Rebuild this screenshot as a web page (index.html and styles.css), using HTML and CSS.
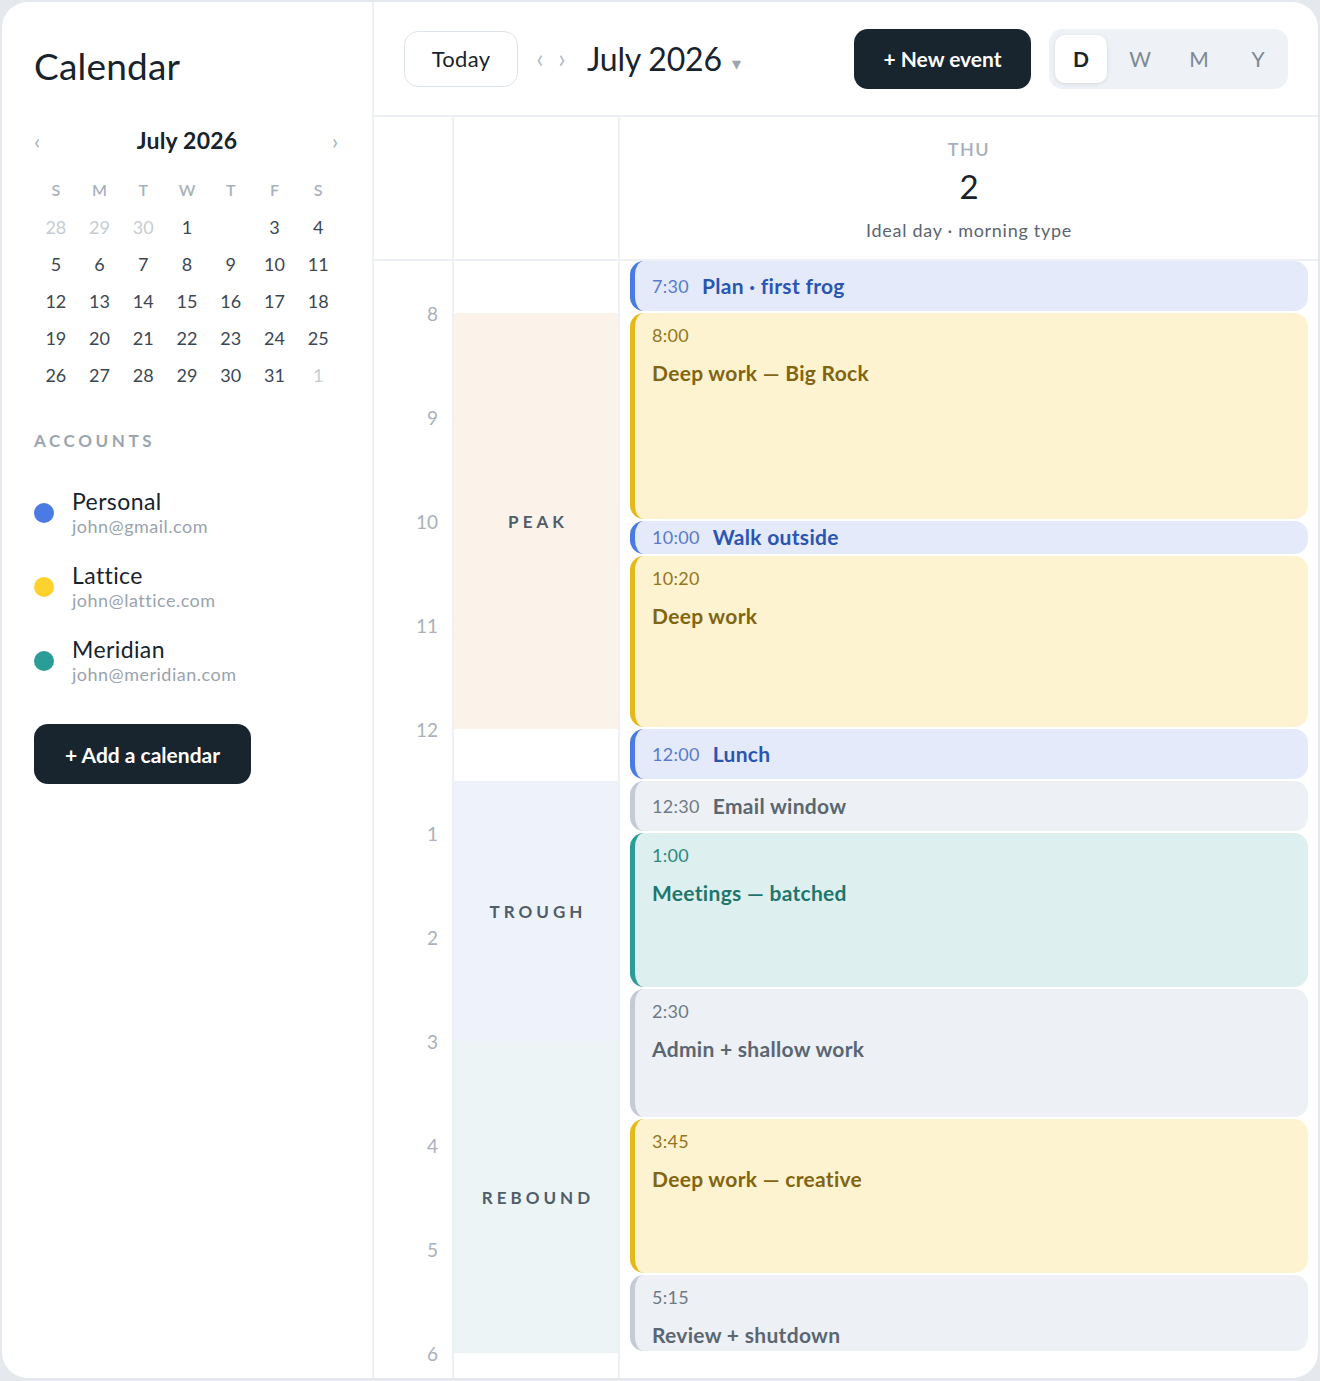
FILE: index.html
```html
<!DOCTYPE html>
<html lang="en">

<head>
	<meta charset="UTF-8">
	<meta name="viewport" content="width=device-width, initial-scale=1.0">
	<title>Calendar</title>
	<link rel="stylesheet" href="styles.css">
</head>

<body>
	<div class="app">
		<aside class="sidebar">
			<h1 class="title">Calendar</h1>

			<div class="miniHead">
				<span class="miniNav">‹</span>
				<span class="miniMonth">July 2026</span>
				<span class="miniNav">›</span>
			</div>
			<div class="miniGrid">
				<span class="dow">S</span><span class="dow">M</span><span class="dow">T</span><span class="dow">W</span><span class="dow">T</span><span class="dow">F</span><span class="dow">S</span>
				<span class="muted">28</span><span class="muted">29</span><span class="muted">30</span><span>1</span><span class="selected">2</span><span>3</span><span>4</span>
				<span>5</span><span>6</span><span>7</span><span>8</span><span>9</span><span>10</span><span>11</span>
				<span>12</span><span>13</span><span>14</span><span>15</span><span>16</span><span>17</span><span>18</span>
				<span>19</span><span>20</span><span>21</span><span>22</span><span>23</span><span>24</span><span>25</span>
				<span>26</span><span>27</span><span>28</span><span>29</span><span>30</span><span>31</span><span class="muted">1</span>
			</div>

			<h3 class="sectionLabel">Accounts</h3>
			<ul class="accounts">
				<li class="account">
					<span class="dot dotBlue"></span>
					<div>
						<div class="accName">Personal</div>
						<div class="accMail">john@gmail.com</div>
					</div>
				</li>
				<li class="account">
					<span class="dot dotYellow"></span>
					<div>
						<div class="accName">Lattice</div>
						<div class="accMail">john@lattice.com</div>
					</div>
				</li>
				<li class="account">
					<span class="dot dotTeal"></span>
					<div>
						<div class="accName">Meridian</div>
						<div class="accMail">john@meridian.com</div>
					</div>
				</li>
			</ul>

			<button class="btnDark btnAdd">+ Add a calendar</button>
		</aside>

		<main class="main">
			<header class="topbar">
				<button class="btnToday">Today</button>
				<span class="navArrow">‹</span>
				<span class="navArrow">›</span>
				<span class="month">July 2026</span>
				<span class="caret">▾</span>
				<span class="spacer"></span>
				<button class="btnDark btnNew">+ New event</button>
				<div class="views">
					<button class="view active">D</button>
					<button class="view">W</button>
					<button class="view">M</button>
					<button class="view">Y</button>
				</div>
			</header>

			<div class="cols dayHead">
				<div class="gutter"></div>
				<div class="zoneCol"></div>
				<div class="dayCol">
					<div class="dayName">THU</div>
					<div class="dayNum">2</div>
					<div class="dayNote">Ideal day · morning type</div>
				</div>
			</div>

			<div class="cols body">
				<!-- one slot per hour, label sits on the hour line -->
				<div class="gutter hours">
					<div class="hour">8</div>
					<div class="hour">9</div>
					<div class="hour">10</div>
					<div class="hour">11</div>
					<div class="hour">12</div>
					<div class="hour">1</div>
					<div class="hour">2</div>
					<div class="hour">3</div>
					<div class="hour">4</div>
					<div class="hour">5</div>
					<div class="hour">6</div>
				</div>

				<!-- energy zones, 104px per hour starting 7:30 -->
				<div class="zoneCol zones">
					<div class="zone" style="height: 52px"></div>
					<div class="zone zonePeak" style="height: 416px">PEAK</div>
					<div class="zone" style="height: 52px"></div>
					<div class="zone zoneTrough" style="height: 260px">TROUGH</div>
					<div class="zone zoneRebound" style="height: 312px">REBOUND</div>
				</div>

				<div class="dayCol events">
					<div class="event short blue" style="height: 50px"><span class="evTime">7:30</span><span class="evTitle">Plan · first frog</span></div>
					<div class="event yellow" style="height: 206px"><div class="evTime">8:00</div><div class="evTitle">Deep work — Big Rock</div></div>
					<div class="event short blue" style="height: 32.67px"><span class="evTime">10:00</span><span class="evTitle">Walk outside</span></div>
					<div class="event yellow" style="height: 171.33px"><div class="evTime">10:20</div><div class="evTitle">Deep work</div></div>
					<div class="event short blue" style="height: 50px"><span class="evTime">12:00</span><span class="evTitle">Lunch</span></div>
					<div class="event short gray" style="height: 50px"><span class="evTime">12:30</span><span class="evTitle">Email window</span></div>
					<div class="event teal" style="height: 154px"><div class="evTime">1:00</div><div class="evTitle">Meetings — batched</div></div>
					<div class="event gray" style="height: 128px"><div class="evTime">2:30</div><div class="evTitle">Admin + shallow work</div></div>
					<div class="event yellow" style="height: 154px"><div class="evTime">3:45</div><div class="evTitle">Deep work — creative</div></div>
					<div class="event gray" style="height: 76px"><div class="evTime">5:15</div><div class="evTitle">Review + shutdown</div></div>
				</div>
			</div>
		</main>
	</div>
</body>

</html>
```

FILE: styles.css
```css
* {
	box-sizing: border-box;
}

body {
	margin: 0;
	padding: 2px;
	background: #e5e9ee;
	font-family: "Lato", "Noto Sans", sans-serif;
	color: #17232d;
}

button {
	font-family: inherit;
	border: none;
	cursor: pointer;
}

.app {
	display: flex;
	height: 1376px;
	background: #fff;
	border-radius: 26px;
	overflow: hidden;
}

/* sidebar */

.sidebar {
	width: 372px;
	flex: none;
	padding: 41px 32px 0;
	border-right: 2px solid #edf0f4;
}

.title {
	margin: 0;
	font-size: 37px;
	line-height: 46px;
	font-weight: 400;
	letter-spacing: 0.2px;
}

.miniHead {
	width: 306px;
	margin-top: 37px;
	display: flex;
	justify-content: space-between;
	align-items: center;
	height: 28px;
}

.miniNav {
	color: #aab3be;
	font-size: 22px;
	width: 8px;
}

.miniMonth {
	font-size: 23px;
	font-weight: 700;
	letter-spacing: 0.2px;
}

.miniGrid {
	width: 306px;
	margin-top: 17px;
	display: grid;
	grid-template-columns: repeat(7, 1fr);
	grid-auto-rows: 37px;
	align-items: center;
	text-align: center;
	font-size: 18px;
	color: #3c4753;
}

.miniGrid .dow {
	font-size: 16px;
	font-weight: 600;
	color: #a8b1bc;
}

.miniGrid .muted {
	color: #c6ccd4;
}

.miniGrid .selected {
	color: #fff;
}

.sectionLabel {
	margin: 38px 0 0;
	font-size: 17px;
	line-height: 20px;
	font-weight: 700;
	letter-spacing: 3.6px;
	text-transform: uppercase;
	color: #9ba5b1;
}

.accounts {
	list-style: none;
	margin: 37px 0 0;
	padding: 0;
	display: flex;
	flex-direction: column;
	gap: 24px;
}

.account {
	display: flex;
	align-items: center;
	gap: 18px;
}

.dot {
	width: 20px;
	height: 20px;
	border-radius: 50%;
	flex: none;
}

.dotBlue { background: #4a7be3; }
.dotYellow { background: #fdd22c; }
.dotTeal { background: #2a9d96; }

.accName {
	font-size: 23px;
	line-height: 26px;
	letter-spacing: 0.4px;
}

.accMail {
	font-size: 18px;
	line-height: 24px;
	letter-spacing: 0.5px;
	color: #9aa3ae;
}

.btnDark {
	background: #18242e;
	color: #fff;
	font-size: 21px;
	font-weight: 700;
	height: 60px;
	border-radius: 14px;
}

.btnAdd {
	margin-top: 38px;
	width: 217px;
}

/* main area */

.main {
	flex: 1;
	display: flex;
	flex-direction: column;
	min-width: 0;
}

.topbar {
	height: 115px;
	flex: none;
	display: flex;
	align-items: center;
	padding: 0 30px;
	border-bottom: 2px solid #edf0f4;
}

.btnToday {
	width: 114px;
	height: 56px;
	background: #fff;
	border: 1.5px solid #dde3ea;
	border-radius: 14px;
	font-size: 22px;
	letter-spacing: 0.3px;
	color: #17232d;
	margin-right: 11px;
}

.navArrow {
	color: #b4bcc6;
	font-size: 26px;
	width: 22px;
	text-align: center;
	margin-top: -2px;
}

.month {
	font-size: 32px;
	margin-left: 14px;
	letter-spacing: -0.2px;
}

.caret {
	color: #9ba4af;
	font-size: 18px;
	margin: 8px 0 0 10px;
}

.spacer {
	flex: 1;
}

.btnNew {
	width: 177px;
	margin-right: 18px;
}

.views {
	display: flex;
	gap: 7px;
	height: 60px;
	padding: 6px 4px 6px 6px;
	background: #eef1f5;
	border-radius: 14px;
}

.view {
	width: 52px;
	height: 48px;
	border-radius: 10px;
	background: none;
	font-size: 21px;
	color: #7d8893;
}

.view.active {
	background: #fff;
	color: #17232d;
	font-weight: 700;
	box-shadow: 0 1px 4px rgba(23, 35, 45, 0.1);
}

/* columns shared by the day header and the time grid */

.cols {
	display: grid;
	grid-template-columns: 80px 166px 1fr;
}

.gutter {
	border-right: 2px solid #edf0f4;
}

.zoneCol {
	border-right: 2px solid #edf0f4;
}

.dayHead {
	height: 144px;
	flex: none;
	border-bottom: 2px solid #edf0f4;
}

.dayHead .dayCol {
	display: flex;
	flex-direction: column;
	align-items: center;
	padding-top: 20px;
}

.dayName {
	font-size: 18px;
	line-height: 24px;
	font-weight: 600;
	letter-spacing: 1.5px;
	color: #a6afba;
}

.dayNum {
	font-size: 33px;
	line-height: 40px;
	margin-top: 5px;
}

.dayNote {
	font-size: 18px;
	line-height: 24px;
	letter-spacing: 0.7px;
	color: #5b6571;
	margin-top: 12px;
}

.body {
	flex: 1;
	min-height: 0;
	overflow: hidden;
}

.hours {
	display: flex;
	flex-direction: column;
}

.hour {
	flex: none;
	height: 104px;
	display: flex;
	align-items: center;
	justify-content: flex-end;
	padding-right: 14px;
	font-size: 19px;
	color: #a9b1bc;
}

.zone {
	display: flex;
	align-items: center;
	justify-content: center;
	font-size: 17px;
	font-weight: 700;
	letter-spacing: 4px;
	padding-left: 4px;
	color: #4f5d69;
}

.zonePeak { background: #fbf2ea; }
.zoneTrough { background: #eef2fb; }
.zoneRebound { background: #ecf4f6; }

/* events */

.events {
	padding: 0 10px;
	display: flex;
	flex-direction: column;
}

.event {
	flex: none;
	margin-bottom: 2px;
	border-left: 5px solid;
	border-radius: 14px;
	padding: 10px 17px;
	overflow: hidden;
}

.event.short {
	display: flex;
	align-items: center;
	gap: 13px;
	padding-top: 0;
	padding-bottom: 0;
}

.evTime {
	font-size: 18px;
	line-height: 24px;
	letter-spacing: 0.3px;
}

.evTitle {
	font-size: 21px;
	line-height: 28px;
	font-weight: 700;
	letter-spacing: 0.3px;
}

.event div.evTitle {
	margin-top: 12px;
}

.blue { background: #e4eaf9; border-color: #4a7be0; }
.blue .evTime { color: #5a7bca; }
.blue .evTitle { color: #2a55b1; }

.yellow { background: #fef3d1; border-color: #e6b818; }
.yellow .evTime { color: #947620; }
.yellow .evTitle { color: #826510; }

.gray { background: #edf0f5; border-color: #c4cbd5; }
.gray .evTime { color: #6f7a86; }
.gray .evTitle { color: #5a6672; }

.teal { background: #ddefee; border-color: #2a9d96; }
.teal .evTime { color: #2a8a82; }
.teal .evTitle { color: #1f766f; }
```
